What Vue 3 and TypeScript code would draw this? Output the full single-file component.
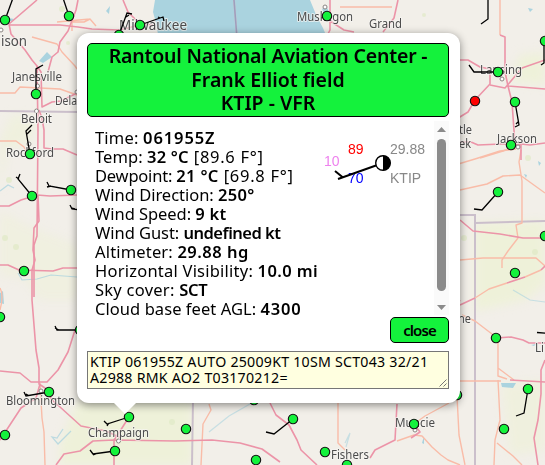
<script setup lang="ts">
interface Field { label: string; value: string; extra?: string; labelGap: number; valueGap: number }
interface Station { x: number; y: number; barb?: string; red?: boolean }
interface Place { x: number; y: number; w: number; name: string; big?: boolean }

const fields: Field[] = [
  { label: 'Time', value: '061955Z', labelGap: 0.2, valueGap: 0.9 },
  { label: 'Temp', value: '32 °C', extra: '[89.6 F°]', labelGap: 0.07, valueGap: 0.2 },
  { label: 'Dewpoint', value: '21 °C', extra: '[69.8 F°]', labelGap: -0.2, valueGap: 0.35 },
  { label: 'Wind Direction', value: '250°', labelGap: -0.02, valueGap: 0.3 },
  { label: 'Wind Speed', value: '9 kt', labelGap: -0.05, valueGap: 0.25 },
  { label: 'Wind Gust', value: 'undefined kt', labelGap: -0.05, valueGap: -0.5 },
  { label: 'Altimeter', value: '29.88 hg', labelGap: 0.17, valueGap: 0.5 },
  { label: 'Horizontal Visibility', value: '10.0 mi', labelGap: 0.23, valueGap: 0.4 },
  { label: 'Sky cover', value: 'SCT', labelGap: 0.25, valueGap: -0.3 },
  { label: 'Cloud base feet AGL', value: '4300', labelGap: 0.06, valueGap: 0.8 },
]

const stations: Station[] = [
  { x: 5, y: 20, barb: 'M5 20L13 -2' },
  { x: 69, y: 16, barb: 'M69 16L63 -2' },
  { x: 119, y: 35, barb: 'M119 35L127 13l5 1M126 17l3-2' },
  { x: 140, y: 25, barb: 'M140 25L163 17l1 4M160 18l-2-1' },
  { x: 36, y: 94, barb: 'M36 94V69l7-4' },
  { x: 327, y: 16 },
  { x: 488, y: -6, barb: 'M488 -4V19l-7 5' },
  { x: 498, y: 72, barb: 'M498 72H474l-5-7' },
  { x: 545, y: 41, barb: 'M544 41V63l-3 2' },
  { x: 475, y: 101, red: true },
  { x: 515, y: 102, barb: 'M515 102L519 125l-4 2M518 122l-2 2' },
  { x: 511, y: 145 },
  { x: 30, y: 154, barb: 'M30 154L26 131l6-6M27 134l4-4' },
  { x: 32, y: 196, barb: 'M32 196L18 179l2-5M19 179l-3-2' },
  { x: 71, y: 190, barb: 'M71 190L49 186l-2-4M51 186l-4 1' },
  { x: 88, y: 211, barb: 'M88 211L72 209l-2-4M75 209l-4-1' },
  { x: 24, y: 271 },
  { x: 0, y: 317 },
  { x: 80, y: 330, barb: 'M80 330H57l-2-4M59 330l-4-2' },
  { x: 49, y: 392, barb: 'M49 392L26 396l-2-4M29 396l-3-2' },
  { x: 5, y: 435 },
  { x: 129, y: 417, barb: 'M129 417L107 424l-3-3M109 423l-2 3' },
  { x: 115, y: 451, barb: 'M115 451L93 454l-3-4M96 454l-3 1' },
  { x: 186, y: 429 },
  { x: 254, y: 400 },
  { x: 293, y: 419, barb: 'M293 419L274 434l-8-2' },
  { x: 256, y: 460 },
  { x: 325, y: 452 },
  { x: 347, y: 465 },
  { x: 414, y: 424 },
  { x: 457, y: 395 },
  { x: 496, y: 338 },
  { x: 528, y: 389, barb: 'M528 389L524 413l-8 3' },
  { x: 504, y: 429 },
  { x: 498, y: 192, barb: 'M498 192L482 210l-8 -1' },
  { x: 545, y: 236 },
  { x: 515, y: 273 },
  { x: 558, y: 334, barb: 'M558 334L537 332.500' },
]

const places: Place[] = [
  { x: 1, y: 46, w: 26, name: 'ison', big: true },
  { x: 119, y: 30, w: 68, name: 'Milwaukee', big: true },
  { x: 12, y: 81, w: 50, name: 'Janesville' },
  { x: 55, y: 105, w: 22, name: 'Dela' },
  { x: 21, y: 123, w: 31, name: 'Beloit' },
  { x: 6, y: 157, w: 48, name: 'Rockford' },
  { x: 297, y: 21, w: 56, name: 'Muskegon' },
  { x: 369, y: 28, w: 33, name: 'Grand' },
  { x: 480, y: 74, w: 42, name: 'Lansing' },
  { x: 459, y: 134, w: 13, name: 'tle' },
  { x: 459, y: 148, w: 12, name: 'ek' },
  { x: 497, y: 143, w: 40, name: 'Jackson' },
  { x: 6, y: 405, w: 69, name: 'Bloomington' },
  { x: 88, y: 437, w: 61, name: 'Champaign' },
  { x: 331, y: 459, w: 38, name: 'Fishers' },
  { x: 395, y: 427, w: 40, name: 'Muncie' },
  { x: 458, y: 323, w: 13, name: 'ne' },
  { x: 535, y: 352, w: 9, name: 'Li' },
]

const motorways: string[] = [
  'M37 0L9 24L11 34L25 50L32 60L37 66L38 130L37 236L34 245V297',
  'M10 25H60L78 27L92 29L119 30L140 25',
  'M78 0L76 10L68 31L60 42L58 52L52 57L48 72',
  'M123 0L128 12L140 24L153 25',
  'M37 66L41 72L42 107L52 102L61 101L77 93',
  'M39 110L42 118L44 130V148L52 149L63 149L77 155',
  'M0 206H9L21 200L37 195L50 196L77 195',
  'M38 195L39 221L34 228L33 250L35 260L32 270V300L36 350L39 368V384L45 388L52 400L60 407L81 426L106 431L121 438',
  'M0 265H8L19 270L53 271L63 268H77',
  'M0 371L20 373L31 382H47L58 370L68 352L75 330',
  'M0 440L21 408L36 398L40 384',
  'M129 417L122 428L114 440V465',
  'M56 465L64 454L80 451L93 441L114 440L175 441L212 440L240 443L262 449L280 462',
  'M270 403L276 415L289 425L297 440L301 450L317 465',
  'M330 0V30L326 38M330 21L344 30L354 32',
  'M398 0L394 18L383 32',
  'M500 35L505 37V72L508 86L545 89',
  'M460 60H468L480 67L490 69V84L475 100L468 112L455 120',
  'M490 85L505 88L522 68L545 60M508 86L512 102L515 145H521V160',
  'M460 142H471L478 145L501 144L521 144L530 145L545 143',
  'M460 220L473 231L500 234L523 238L545 238',
  'M460 305L475 298M507 283L525 277M541 270L545 266',
  'M460 300L455 308',
  'M496 338L511 337L523 340L529 343H545M545 360L541 370V394L538 420L534 438L538 465',
  'M370 458L375 450L395 440L397 404M414 424L420 432L411 438',
  'M510 380L545 382',
]
const trunks: string[] = [
  'M32 37L57 44L62 52L75 66L77 69M72 31V22H84L90 19L96 26M57 22L90 19',
  'M0 93H15L20 87L60 89L77 95M0 141H16L24 147L27 153',
  'M0 310Q4 295 0 288M40 383L42 418L44 432L45 465',
  'M340 7H392M455 165L475 159L500 151L516 149M460 190L487 184L503 176L520 175L545 193',
  'M500 0V35M521 150L519 162L522 181V223L516 225L518 238L508 251L502 260V268',
  'M460 260L483 258H536L545 266M475 298L489 289L507 283M525 277L541 270',
  'M462 315L475 321L492 334L498 343V376L507 379M498 368L514 380M501 381H460',
  'M498 380L500 420L495 440L494 465M497 443L513 456L522 465',
  'M457 396L459 435L465 465M414 424L425 416L449 403M397 441L414 435L422 436L432 447L441 455L448 460L460 465',
  'M209 404L211 410L203 424L201 465M338 400V443L345 450M515 146L503 151L480 158',
]
const borders: string[] = [
  'M234 0L237 38',
  'M0 111L77 112',
  'M193 400L192 465',
  'M460 215H475V465M475 223L545 221',
]
</script>

<template>
  <main class="screen">
    <svg class="map" width="545" height="465" viewBox="0 0 545 465">
      <rect width="545" height="465" fill="#f2efe9" />
      <defs>
        <filter id="soft" x="-20%" y="-20%" width="140%" height="140%"><feGaussianBlur stdDeviation="5" /></filter>
      </defs>
      <g fill="#eef1d9" filter="url(#soft)">
        <path d="M12 115L36 118L30 142L8 150L0 190V140Z" opacity=".7" />
        <path d="M520 55L545 53V85L510 80Z" />
        <path d="M475 223L545 221V285L525 300L475 311Z" />
        <path d="M78 400H192V465H60V445Z" />
        <path d="M0 210L26 225L77 245V300H40L25 280L0 275Z" opacity=".55" />
        <path d="M502 385L545 380V450L510 455Z" opacity=".7" />
      </g>
      <g fill="#dfe9c4" opacity=".65">
        <circle cx="62" cy="9" r="3" /><circle cx="93" cy="35" r="2" /><circle cx="68" cy="43" r="2" />
        <circle cx="90" cy="44" r="2" /><circle cx="9" cy="180" r="3" /><circle cx="528" cy="158" r="3" />
        <circle cx="424" cy="15" r="2" /><circle cx="464" cy="238" r="3" /><circle cx="172" cy="422" r="3" />
        <circle cx="5" cy="238" r="3" /><circle cx="16" cy="247" r="3" /><circle cx="535" cy="252" r="3" />
      </g>
      <path d="M155 0L153 12L156 23L159 40H328L323 28L317 17L310 0Z" fill="#aad3df" />
      <g fill="none" stroke="#aad3df" stroke-width="1.200">
        <path d="M0 191L8 185L14 188M18 273L22 280L37 279L51 275L77 277M63 429L57 438L52 437L58 444L71 431" opacity=".75" />
        <path d="M345 443L350 433L346 447M513 290L530 300L545 302M209 432L229 416L250 404" opacity=".6" />
      </g>
      <g fill="#aad3df">
        <path d="M39 61L47 52L52 57L43 63ZM322 9L326 5L329 12L324 13ZM501 383H516L513 388L502 387ZM0 293l3-2 1 13-4-1Z" />
        <path d="M9 18l5 1-3 3ZM106 11l4-5-1 8ZM538 161l3 2-2 3ZM524 174l3 1-1 3ZM422 443l2-7v8ZM528 8l5 1-3 3ZM531 345l5-1-2 2Z" />
      </g>
      <g fill="none" stroke="#cbbfcb" stroke-width="2"><path v-for="d in borders" :key="d" :d="d" /></g>
      <g fill="none" stroke="#f9bca8" stroke-width="1.400" stroke-linejoin="round"><path v-for="d in trunks" :key="d" :d="d" /></g>
      <g fill="none" stroke="#ec94a8" stroke-width="1.600" stroke-linejoin="round"><path v-for="d in motorways" :key="d" :d="d" /></g>
      <path d="M234 0L237 38" fill="none" stroke="#9c9fbd" stroke-width="1.500" />
      <g fill="#fff" stroke="#8b8582">
        <circle cx="37.500" cy="86" r="2" /><circle cx="36.500" cy="111" r="2" /><circle cx="29" cy="144" r="2" />
        <circle cx="1" cy="30" r="2" /><circle cx="41" cy="391" r="2" /><circle cx="118.500" cy="441" r="2" />
        <circle cx="325" cy="7" r="2" /><circle cx="502" cy="79" r="2" /><circle cx="518" cy="147" r="2" />
        <circle cx="415" cy="430" r="2" /><circle cx="77" cy="92" r="2" />
      </g>
      <g class="places">
        <text v-for="p in places" :key="p.name" :x="p.x" :y="p.y" :textLength="p.w" lengthAdjust="spacingAndGlyphs" :class="{ big: p.big }">{{ p.name }}</text>
      </g>
      <g v-for="s in stations" :key="s.x + '-' + s.y">
        <path v-if="s.barb" :d="s.barb" fill="none" stroke="#000" stroke-width="1.300" />
        <circle :cx="s.x" :cy="s.y" r="4.700" :fill="s.red ? '#f00' : '#14f23c'" stroke="#111" stroke-width="1.100" />
      </g>
    </svg>

    <section class="popup">
      <h1 class="title">
        <span class="name">Rantoul National Aviation Center -</span>
        <span>Frank Elliot field</span>
        <span>KTIP - VFR</span>
      </h1>
      <div class="details">
        <ul class="fields">
          <li v-for="f in fields" :key="f.label"><span :style="{ letterSpacing: f.labelGap + 'px' }">{{ f.label }}: </span><b :style="{ letterSpacing: f.valueGap + 'px' }">{{ f.value }}</b><span v-if="f.extra" class="extra">&nbsp;{{ f.extra }}</span></li>
        </ul>
        <svg class="plot" width="110" height="60" viewBox="320 135 110 60">
          <text x="348" y="154" fill="#f00">89</text>
          <text x="324" y="166" fill="#ee82ee">10</text>
          <text x="348" y="183" fill="#00f">70</text>
          <text x="390" y="154" fill="#888">29.88</text>
          <text x="390" y="183" fill="#888">KTIP</text>
          <path d="M383 163L338 179M343 177.500L335 171" fill="none" stroke="#000" stroke-width="2" />
          <circle cx="383" cy="163" r="7.300" fill="#fff" stroke="#000" stroke-width="1.400" />
          <path d="M383 155.500a7.500 7.500 0 0 1 0 15Z" />
        </svg>
        <div class="scroll">
          <svg width="9" height="5" viewBox="0 0 9 5"><path d="M0 5L4.500 0L9 5Z" fill="#8b8b8b" /></svg>
          <div class="thumb"></div>
          <svg class="down" width="9" height="5" viewBox="0 0 9 5"><path d="M0 0L4.500 5L9 0Z" fill="#8b8b8b" /></svg>
        </div>
      </div>
      <button class="close" type="button">close</button>
      <div class="metar">
        <span>KTIP 061955Z AUTO 25009KT 10SM SCT043 32/21</span>
        <span>A2988 RMK AO2 T03170212=</span>
        <svg class="grip" width="8" height="8" viewBox="0 0 8 8"><path d="M.5 7.500L7.500 .5M4.500 7.500L7.500 4.500" stroke="#777" /></svg>
      </div>
      <svg class="tip" width="22" height="11" viewBox="0 0 22 11"><path d="M0 0H22L11 11Z" fill="#fff" /></svg>
    </section>
  </main>
</template>

<style>
body { margin: 0; overflow: hidden; }
</style>

<style scoped>
.screen { position: relative; width: 545px; height: 465px; overflow: hidden; font-family: "Noto Sans", sans-serif; color: #000; }
.map { display: block; }
.places { font: 12px "Noto Sans", sans-serif; fill: #4c4c4c; stroke: #f7f5f2; stroke-opacity: .7; stroke-width: 2px; paint-order: stroke; stroke-linejoin: round; }
.places .big { font-size: 14px; }
.popup { position: absolute; left: 77px; top: 33px; width: 383px; height: 370px; box-sizing: border-box; padding: 10px 11px 14px 10px; background: #fff; border-radius: 12px; box-shadow: 0 2px 8px rgba(0,0,0,.45); display: flex; flex-direction: column; }
.title { margin: 0; height: 74px; flex: none; box-sizing: border-box; border: 1px solid #000; border-radius: 5px; background: #14f23c; display: flex; flex-direction: column; align-items: center; font-size: 19.5px; line-height: 23.7px; font-weight: 600; white-space: nowrap; }
.title .name { letter-spacing: -.19px; }
.details { margin-top: 4px; height: 194px; flex: none; display: flex; align-items: flex-start; }
.fields { list-style: none; margin: 7px 0 0; padding: 0 0 0 8px; width: 225px; flex: none; font-size: 16.5px; line-height: 19px; white-space: pre; }
.fields li { height: 19px; }
.fields b { font-weight: 600; }
.extra { letter-spacing: .7px; }
.plot { margin: 14px 4px 0 0; flex: none; font: 14px "Liberation Sans", sans-serif; }
.scroll { margin-left: auto; width: 15px; height: 194px; box-sizing: border-box; padding: 6px 0 5px; background: #fafafa; display: flex; flex-direction: column; align-items: center; }
.thumb { margin-top: 7px; width: 9px; height: 152px; flex: none; border-radius: 5px; background: #8b8b8b; }
.down { margin-top: auto; }
.close { align-self: flex-end; margin: 2px 0 0; padding: 0 0 1px; width: 59px; height: 26px; flex: none; border: 1px solid #000; border-radius: 5px; background: #14f23c; color: #000; font: 600 15px/20px "Noto Sans", sans-serif; letter-spacing: -.9px; }
.metar { position: relative; box-sizing: border-box; height: 38px; flex: none; margin-top: 8px; padding: 2px; border: 1px solid #767676; background: #ffffe0; font-size: 14.2px; line-height: 16px; letter-spacing: .24px; display: flex; flex-direction: column; align-items: flex-start; white-space: nowrap; }
.grip { position: absolute; right: 1px; bottom: 1px; }
.tip { position: absolute; left: 37px; top: 370px; }
</style>
